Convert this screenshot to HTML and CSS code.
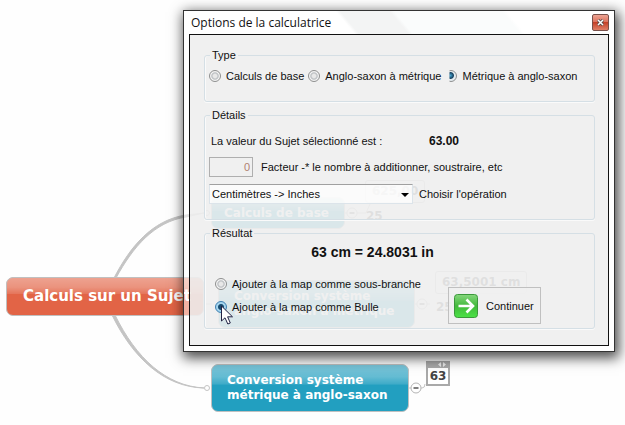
FILE: index.html
```
<!DOCTYPE html>
<html lang="fr">
<head>
    <meta charset="UTF-8">
    <meta name="viewport" content="width=device-width, initial-scale=1.0">
    <title>Options de la calculatrice</title>
    <link rel="stylesheet" href="styles.css">
</head>
<body>
    <main class="map">
        <svg class="links" width="625" height="425" fill="none" stroke="#c4c4c4" aria-hidden="true">
            <path d="M114 278C130 247 152 220 186 215L204 213L186 217C154 222 133 247 116 278Z" fill="#c4c4c4"/>
            <path d="M112 315C133 358 164 387 204 388C166 386 136 358 115 315Z" fill="#c4c4c4"/>
            <circle cx="207" cy="388" r="2.5" fill="#fff"/>
            <circle cx="207" cy="213" r="2.5" fill="#fff"/>
            <path d="M204 304H212M345 213H366L370 204M415 304H430M409 388H422Q425 388 425 384"/>
            <g fill="#fff" stroke="#b4b4b4">
                <circle cx="352" cy="213" r="5"/>
                <circle cx="422" cy="304" r="5"/>
                <circle cx="416" cy="388" r="5"/>
            </g>
            <path d="M349.500 213H354.500M419.500 304H424.500M413.500 388H418.500" stroke="#555" stroke-width="1.500"/>
        </svg>

        <div class="node node-root">Calculs sur un Sujet</div>
        <div class="node node-base">Calculs de base</div>
        <div class="node node-metric">Conversion système<br>anglo-saxon à métrique</div>
        <div class="node node-anglo">Conversion système<br>métrique à anglo-saxon</div>

        <div class="bubble bubble-base">625,00</div>
        <div class="bubble bubble-metric">63,5001 cm</div>
        <div class="value value-base">25</div>
        <div class="value value-metric">25</div>
        <div class="badge">
            <svg class="badge-arrows" width="8" height="5" viewBox="0 0 8 5" fill="#eee" aria-hidden="true">
                <path d="M3 0V5L0 2.500ZM5 0V5L8 2.500Z"/>
            </svg>
            <span class="badge-value">63</span>
        </div>
    </main>

    <form class="dialog">
        <header class="titlebar">
            <h1>Options de la calculatrice</h1>
            <button type="button" class="close" aria-label="Fermer">
                <svg width="7" height="7" viewBox="0 0 7 7" aria-hidden="true">
                    <path d="M1 1L6 6M6 1L1 6" stroke="#4b4b4b" stroke-width="3"/>
                    <path d="M1 1L6 6M6 1L1 6" stroke="#fff" stroke-width="1.500"/>
                </svg>
            </button>
        </header>

        <div class="content">
            <fieldset>
                <legend>Type</legend>
                <div class="types">
                    <label><input type="radio" name="type"> Calculs de base</label>
                    <label><input type="radio" name="type"> Anglo-saxon à métrique</label>
                    <label><input type="radio" name="type" class="cut" checked> Métrique à anglo-saxon</label>
                </div>
            </fieldset>

            <fieldset>
                <legend>Détails</legend>
                <div class="details">
                    <div class="topic">
                        <span class="topic-label">La valeur du Sujet sélectionné est :</span>
                        <strong>63.00</strong>
                    </div>
                    <div class="field">
                        <input type="text" id="factor" class="factor" value="0" disabled>
                        <label for="factor">Facteur -* le nombre à additionner, soustraire, etc</label>
                    </div>
                    <div class="field field-operation">
                        <span class="select">
                            <select id="operation">
                                <option>Centimètres -&gt; Inches</option>
                            </select>
                        </span>
                        <label for="operation">Choisir l'opération</label>
                    </div>
                </div>
            </fieldset>

            <fieldset>
                <legend>Résultat</legend>
                <p class="result">63 cm = 24.8031 in</p>
                <div class="output">
                    <div class="choices">
                        <label><input type="radio" name="target"> Ajouter à la map comme sous-branche</label>
                        <label><input type="radio" name="target" class="hot" checked> Ajouter à la map comme Bulle</label>
                    </div>
                    <button type="button" class="continue">
                        <svg width="24" height="24" viewBox="0 0 24 24" aria-hidden="true">
                            <defs>
                                <linearGradient id="green" x1="0" y1="0" x2="0" y2="1">
                                    <stop offset="0" stop-color="#86d77d"/>
                                    <stop offset=".5" stop-color="#42b93b"/>
                                    <stop offset="1" stop-color="#4be246"/>
                                </linearGradient>
                            </defs>
                            <rect x=".5" y=".5" width="23" height="23" rx="3" fill="url(#green)" stroke="#3b983b"/>
                            <path d="M4.500 12H18M12.500 5.500L19 12L12.500 18.500" fill="none" stroke="#fff" stroke-width="2.600"/>
                        </svg>
                        Continuer
                    </button>
                </div>
            </fieldset>
        </div>
    </form>

    <svg class="cursor" width="13" height="21" viewBox="0 0 13 21" aria-hidden="true">
        <path d="M.5 1V16L4 12.800L6.800 19L9.300 18L6.600 11.800H11.500Z" fill="#fff" stroke="#222244"/>
    </svg>
</body>
</html>
```
FILE: styles.css
```
:root {
    --red: #e26446;
    --blue: #229fc0;
    --map-border: #c0c0c0;
    --group-border: #d5dfe5;
    --text: #111111;
    --face: rgba(236, 236, 236, 0.8);
}

* {
    margin: 0;
    padding: 0;
    box-sizing: border-box;
}

body {
    position: relative;
    min-height: 100vh;
    overflow: hidden;
    background-color: #fefefe;
    color: var(--text);
    font: 11px/14px "Liberation Sans", Arial, sans-serif;
}

/* Mind map */
.map {
    font-family: "DejaVu Sans", Verdana, sans-serif;
    font-size: 12px;
    font-weight: bold;
}

.links {
    position: absolute;
    left: 0;
    top: 0;
}

.node {
    position: absolute;
    display: flex;
    align-items: center;
    border: 1px solid var(--map-border);
    border-radius: 7px;
    color: #ffffff;
    line-height: 15px;
    white-space: nowrap;
    background-color: var(--blue);
    background-image: linear-gradient(rgba(255, 255, 255, 0.4), rgba(255, 255, 255, 0.3) 25%, rgba(255, 255, 255, 0.12) 42%, transparent 43%);
}

.node-root {
    left: 6px;
    top: 277px;
    width: 198px;
    height: 39px;
    padding-left: 16px;
    background-color: var(--red);
    font-size: 15px;
}

.node-base {
    left: 211px;
    top: 197px;
    width: 134px;
    height: 32px;
    padding-left: 12px;
}

.node-metric {
    left: 218px;
    top: 280px;
    width: 197px;
    height: 48px;
    padding-left: 15px;
}

.node-anglo {
    left: 211px;
    top: 364px;
    width: 198px;
    height: 48px;
    padding-left: 15px;
}

.bubble {
    position: absolute;
    padding: 2px 6px;
    border: 1px solid var(--map-border);
    border-radius: 3px;
    background-color: #ffffff;
    color: #555555;
    line-height: 17px;
}

.bubble-base {
    left: 365px;
    top: 180px;
}

.bubble-metric {
    left: 435px;
    top: 271px;
}

.value {
    position: absolute;
    color: #555555;
}

.value-base {
    left: 366px;
    top: 209px;
}

.value-metric {
    left: 436px;
    top: 300px;
}

.badge {
    position: absolute;
    left: 426px;
    top: 361px;
    display: flex;
    flex-direction: column;
    align-items: center;
    width: 24px;
    padding-bottom: 2px;
    background-color: #a9a9a9;
}

.badge-arrows {
    align-self: flex-end;
    margin: 1px 4px;
}

.badge-value {
    width: 20px;
    background-color: #ffffff;
    color: #444444;
    line-height: 16px;
    text-align: center;
}

/* Dialog */
.dialog {
    position: absolute;
    left: 183px;
    right: 10px;
    top: 10px;
    padding: 0 5px 5px;
    border: 1px solid #333333;
    background-color: rgba(255, 255, 255, 0.5);
    background-clip: padding-box;
    box-shadow: 2px 4px 12px 2px rgba(0, 0, 0, 0.7);
}

.titlebar {
    display: flex;
    align-items: center;
    justify-content: space-between;
    height: 23px;
    margin: 0 -5px;
    padding: 0 5px 0 7px;
    background: linear-gradient(50deg, #ffffff 38%, #f3f4f4 39%, #f3f4f4 50%, #fafcfc 51%, #fafcfc 75%, #ffffff 76%);
}

.titlebar h1 {
    font: 12px/16px "Open Sans", "Segoe UI", sans-serif;
}

.close {
    display: flex;
    align-items: center;
    justify-content: center;
    width: 17px;
    height: 17px;
    border: 1px solid #79504a;
    border-radius: 2px;
    background: linear-gradient(#eca494, #dd705b 48%, #c44128 50%, #df8068);
}

.content {
    display: flex;
    flex-direction: column;
    gap: 6px;
    padding: 13px 13px 16px 14px;
    border: 1px solid #111111;
    background-color: var(--face);
    background-clip: padding-box;
}

fieldset {
    min-width: 0;
    padding: 0 4px;
    border: 1px solid var(--group-border);
    border-radius: 3px;
    box-shadow: inset 1px 0 #fafafa, 0 1px #fafafa;
}

legend {
    margin-left: 1px;
    padding: 0 2px;
}

label {
    display: flex;
    align-items: center;
    gap: 5px;
    white-space: nowrap;
}

input[type=radio] {
    appearance: none;
    width: 12px;
    height: 12px;
    border: 1px solid #8e8f8f;
    border-radius: 50%;
    background: radial-gradient(#e8e8e8 25%, #b8bcbf 45%, #f4f4f4 60%);
}

input[type=radio]:checked {
    background: radial-gradient(circle at 45% 45%, #4aa5cf, #14405f 38%, #e4ecf0 50%);
}

input[type=radio].hot {
    border-color: #3c7fb1;
    background: radial-gradient(#164a6e 35%, #a5d5ee 50%);
}

input[type=radio].cut {
    clip-path: inset(0 0 0 4px);
}

.types {
    display: flex;
    gap: 4px;
    padding: 7px 0 18px;
}

.details {
    padding: 12px 0 15px;
}

.topic {
    display: flex;
    padding-left: 2px;
}

.topic-label {
    width: 218px;
}

.topic strong {
    font-size: 12px;
}

.field {
    display: flex;
    align-items: center;
    gap: 8px;
    margin-top: 9px;
}

.field-operation {
    gap: 6px;
    margin-top: 7px;
}

.factor {
    width: 44px;
    height: 20px;
    padding: 0 2px;
    border: 1px solid #afafaf;
    background-color: transparent;
    color: #b08070;
    font: inherit;
    text-align: right;
}

.select {
    position: relative;
    width: 204px;
}

.select::after {
    content: "";
    position: absolute;
    right: 4px;
    top: 9px;
    border: 4px solid transparent;
    border-top-color: #000000;
    border-bottom: 0;
}

select {
    display: block;
    appearance: none;
    width: 100%;
    height: 20px;
    padding: 0 2px;
    border: 1px solid #dce4ea;
    border-top-color: #a0a0a0;
    background-color: rgba(255, 255, 255, 0.7);
    color: var(--text);
    font: inherit;
}

.result {
    padding: 4px 54px 0 0;
    font-size: 14px;
    font-weight: bold;
    line-height: 16px;
    text-align: center;
}

.output {
    display: flex;
    align-items: flex-start;
    padding: 17px 0 4px 6px;
}

.choices {
    display: flex;
    flex-direction: column;
    gap: 9px;
    width: 233px;
}

.continue {
    display: flex;
    align-items: center;
    gap: 8px;
    width: 93px;
    height: 37px;
    margin-top: 10px;
    padding: 0 5px;
    border: 1px solid #c0c0c0;
    background-color: rgba(240, 240, 240, 0.8);
    color: var(--text);
    font: inherit;
}

.cursor {
    position: absolute;
    left: 221px;
    top: 305px;
}
```
